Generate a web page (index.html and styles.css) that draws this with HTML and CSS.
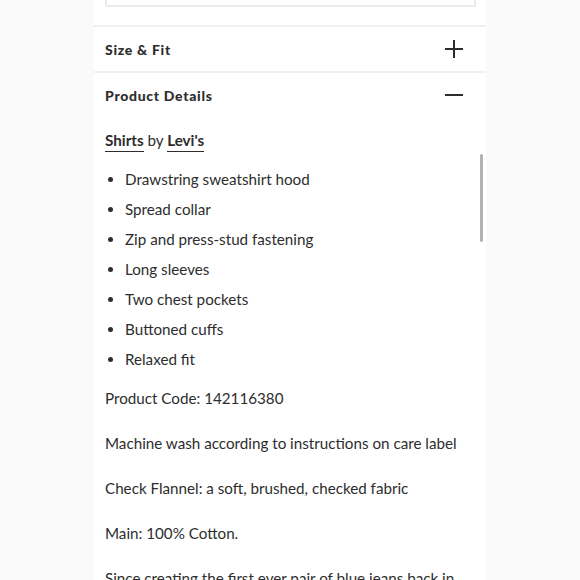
FILE: index.html
```html
<!DOCTYPE html>
<html lang="en">
<head>
<meta charset="utf-8">
<title>Product Details</title>
<link rel="stylesheet" href="styles.css">
</head>
<body>
<div class="panel">
  <div class="top">
    <div class="prev-box"></div>
  </div>
  <div class="row">
    <h2 class="row-title">Size &amp; Fit</h2>
    <svg class="icon" width="20" height="20" viewBox="0 0 20 20" aria-hidden="true">
      <path d="M1 10H19M10 1V19" stroke="#2d2d2d" stroke-width="2" fill="none"/>
    </svg>
  </div>
  <div class="row open">
    <h2 class="row-title">Product Details</h2>
    <svg class="icon" width="20" height="20" viewBox="0 0 20 20" aria-hidden="true">
      <path d="M1 10H19" stroke="#2d2d2d" stroke-width="2" fill="none"/>
    </svg>
  </div>
  <div class="content">
    <div class="scrollbar"></div>
    <p class="by"><a href="#">Shirts</a> by <a href="#">Levi's</a></p>
    <ul class="features">
      <li>Drawstring sweatshirt hood</li>
      <li>Spread collar</li>
      <li>Zip and press-stud fastening</li>
      <li>Long sleeves</li>
      <li>Two chest pockets</li>
      <li>Buttoned cuffs</li>
      <li>Relaxed fit</li>
    </ul>
    <p class="para code">Product Code: 142116380</p>
    <p class="para">Machine wash according to instructions on care label</p>
    <p class="para">Check Flannel: a soft, brushed, checked fabric</p>
    <p class="para">Main: 100% Cotton.</p>
    <p class="para">Since creating the first ever pair of blue jeans back in</p>
  </div>
</div>
</body>
</html>
```
FILE: styles.css
```css
html, body {
  margin: 0;
  padding: 0;
}
body {
  background: #fafafa;
  font-family: Lato, "Liberation Sans", sans-serif;
  color: #2d2d2d;
  overflow: hidden;
  height: 580px;
}
.panel {
  width: 392px;
  margin-left: 94px;
  background: #fff;
  min-height: 580px;
}
.top {
  height: 27px;
  padding: 0 10px 0 11px;
  box-sizing: border-box;
  border-bottom: 2px solid #f0f0f0;
}
.prev-box {
  height: 5px;
  border: 2px solid #ebebeb;
  border-top: none;
}
.row {
  height: 44px;
  display: flex;
  align-items: center;
  justify-content: space-between;
  padding: 0 22px 0 11px;
  border-bottom: 2px solid #f0f0f0;
}
.row.open {
  border-bottom: none;
}
.row-title {
  margin: 0;
  font-size: 14px;
  font-weight: 900;
  letter-spacing: 0.7px;
}
.icon {
  display: block;
}
.content {
  position: relative;
  padding: 11px 11px 0 11px;
  font-size: 15.2px;
}
.scrollbar {
  position: absolute;
  left: 386px;
  top: 37px;
  width: 3px;
  height: 88px;
  background: #b2b2b2;
  border-radius: 2px;
}
.by {
  margin: 0;
  line-height: 24px;
}
.by a {
  color: #2d2d2d;
  font-weight: 700;
  text-decoration: none;
  border-bottom: 1.5px solid #2d2d2d;
  padding-bottom: 2px;
}
.features {
  list-style: none;
  margin: 12px 0 0 0;
  padding: 0;
}
.features li {
  position: relative;
  line-height: 30px;
  padding-left: 20px;
}
.features li::before {
  content: "";
  position: absolute;
  left: 3px;
  top: 13px;
  width: 5px;
  height: 5px;
  border-radius: 50%;
  background: #2d2d2d;
}
.para {
  margin: 0 0 21px 0;
  line-height: 24px;
  white-space: nowrap;
}
.code {
  margin-top: 12px;
}
```
